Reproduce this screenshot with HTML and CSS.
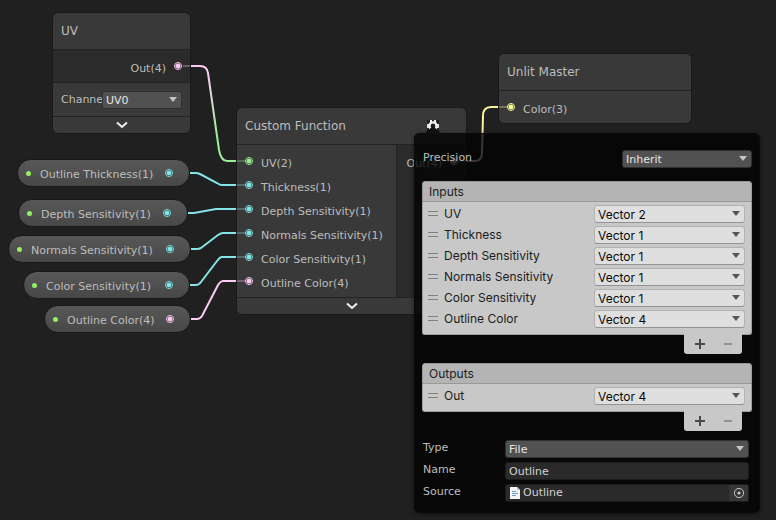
FILE: index.html
```html
<!DOCTYPE html>
<html lang="en">
<head>
<meta charset="utf-8">
<title>Shader Graph</title>
<link rel="stylesheet" href="styles.css">
</head>
<body>
<main class="graph">
  <section class="node node-uv">
    <h2 class="node-title">UV</h2>
    <div class="port-area port-area-out">
      <div class="port port-out">Out(4)<i class="dot pink"></i></div>
    </div>
    <div class="control">
      <label class="control-label" for="channel">Channel</label>
      <span class="select dark control-select"><select id="channel"><option>UV0</option></select></span>
    </div>
    <button class="collapse" aria-label="Collapse UV"><svg width="12" height="8" viewBox="0 0 12 8"><path d="M1 1.5 6 6 11 1.5"/></svg></button>
  </section>

  <section class="node node-custom">
    <h2 class="node-title">Custom Function
      <button class="gear" aria-label="Settings"><svg width="12" height="12" viewBox="0 0 12 12"><rect width="12" height="12" fill="#222"/><circle cx="6" cy="6" r="3.6" fill="none" stroke="#f2f2f2" stroke-width="2.4"/><path d="M3 1h2M7 1h2M1 4v4M11 4v4M2.4 11h2M7.6 11h2" stroke="#f2f2f2" stroke-width="1.8"/></svg></button>
    </h2>
    <div class="node-body">
      <div class="port-area inputs">
        <div class="port"><i class="dot green"></i>UV(2)</div>
        <div class="port"><i class="dot cyan"></i>Thickness(1)</div>
        <div class="port"><i class="dot cyan"></i>Depth Sensitivity(1)</div>
        <div class="port"><i class="dot cyan"></i>Normals Sensitivity(1)</div>
        <div class="port"><i class="dot cyan"></i>Color Sensitivity(1)</div>
        <div class="port"><i class="dot pink"></i>Outline Color(4)</div>
      </div>
      <div class="port-area port-area-out outputs">
        <div class="port port-out">Out(4)<i class="dot pink"></i></div>
      </div>
    </div>
    <button class="collapse" aria-label="Collapse Custom Function"><svg width="12" height="8" viewBox="0 0 12 8"><path d="M1 1.5 6 6 11 1.5"/></svg></button>
  </section>

  <section class="node node-unlit">
    <h2 class="node-title">Unlit Master</h2>
    <div class="port-area">
      <div class="port"><i class="dot yellow"></i>Color(3)</div>
    </div>
  </section>

  <div class="pill pill-thickness"><i class="lamp"></i><span>Outline Thickness(1)</span><i class="dot cyan"></i></div>
  <div class="pill pill-depth"><i class="lamp"></i><span>Depth Sensitivity(1)</span><i class="dot cyan"></i></div>
  <div class="pill pill-normals"><i class="lamp"></i><span>Normals Sensitivity(1)</span><i class="dot cyan"></i></div>
  <div class="pill pill-color"><i class="lamp"></i><span>Color Sensitivity(1)</span><i class="dot cyan"></i></div>
  <div class="pill pill-outline"><i class="lamp"></i><span>Outline Color(4)</span><i class="dot pink"></i></div>

  <svg class="wires" width="776" height="520" viewBox="0 0 776 520" aria-hidden="true">
    <defs>
      <linearGradient id="pinkGreen" gradientUnits="userSpaceOnUse" x1="0" y1="66" x2="0" y2="161"><stop offset="0.1" stop-color="#fbcbf4"/><stop offset="0.75" stop-color="#9aef92"/></linearGradient>
      <linearGradient id="pinkYellow" gradientUnits="userSpaceOnUse" x1="0" y1="161" x2="0" y2="107"><stop offset="0" stop-color="#fbcbf4"/><stop offset="0.7" stop-color="#f6f19a"/></linearGradient>
    </defs>
    <path stroke="url(#pinkGreen)" d="M191 66h9q7 0 8 7L219 150q2 11 8 11h9"/>
    <path class="c" d="M190 173h6q2 0 4 1l17 9q3 2 5 2h14"/>
    <path class="c" d="M188 213h6l22-4h20"/>
    <path class="c" d="M191 249h6q2 0 4-1l17-13q3-2 5-2h13"/>
    <path class="c" d="M190 285h6q3 0 5-3l16-21q3-4 5-4h14"/>
    <path class="p" d="M191 319h6q3 0 5-3l15-29q3-6 6-6h13"/>
    <path stroke="url(#pinkYellow)" d="M467 161h8q7 0 7-9l1-36q0-9 8-9h7"/>
    <g opacity=".3">
      <path class="p" d="M183 66h7M459 161h7"/>
      <path class="g" d="M237 161h8"/>
      <path class="c" d="M237 185h8M237 209h8M237 233h8M237 257h8"/>
      <path class="p" d="M237 281h8"/>
      <path class="y" d="M499 107h8"/>
    </g>
  </svg>

  <form class="panel">
    <svg class="pointer" width="18" height="8" viewBox="0 0 18 8" aria-hidden="true"><path d="M0 8 9 0l9 8z"/></svg>
    <div class="precision">
      <label for="precision">Precision</label>
      <span class="select dark"><select id="precision"><option>Inherit</option></select></span>
    </div>

    <section class="list">
      <h3 class="list-title">Inputs</h3>
      <div class="list-body">
        <label class="item"><i class="grip"></i><span>UV</span><span class="select light"><select><option>Vector 2</option></select></span></label>
        <label class="item"><i class="grip"></i><span>Thickness</span><span class="select light"><select><option>Vector 1</option></select></span></label>
        <label class="item"><i class="grip"></i><span>Depth Sensitivity</span><span class="select light"><select><option>Vector 1</option></select></span></label>
        <label class="item"><i class="grip"></i><span>Normals Sensitivity</span><span class="select light"><select><option>Vector 1</option></select></span></label>
        <label class="item"><i class="grip"></i><span>Color Sensitivity</span><span class="select light"><select><option>Vector 1</option></select></span></label>
        <label class="item"><i class="grip"></i><span>Outline Color</span><span class="select light"><select><option>Vector 4</option></select></span></label>
      </div>
      <div class="list-tools">
        <button type="button" aria-label="Add input"><svg width="10" height="10" viewBox="0 0 10 10"><path d="M0 5h10M5 0v10"/></svg></button>
        <button type="button" class="off" aria-label="Remove input"><svg width="10" height="10" viewBox="0 0 10 10"><path d="M1 5h8"/></svg></button>
      </div>
    </section>

    <section class="list">
      <h3 class="list-title">Outputs</h3>
      <div class="list-body">
        <label class="item"><i class="grip"></i><span>Out</span><span class="select light"><select><option>Vector 4</option></select></span></label>
      </div>
      <div class="list-tools">
        <button type="button" aria-label="Add output"><svg width="10" height="10" viewBox="0 0 10 10"><path d="M0 5h10M5 0v10"/></svg></button>
        <button type="button" class="off" aria-label="Remove output"><svg width="10" height="10" viewBox="0 0 10 10"><path d="M1 5h8"/></svg></button>
      </div>
    </section>

    <div class="fields">
      <label for="type">Type</label>
      <span class="select dark"><select id="type"><option>File</option></select></span>
      <label for="name">Name</label>
      <input class="field" id="name" type="text" value="Outline">
      <label for="source">Source</label>
      <div class="field object">
        <svg width="10" height="12" viewBox="0 0 10 12" aria-hidden="true"><path fill="#f4f4f4" d="M0 0h7l3 3v9H0z"/><path fill="#b8c4d0" d="M7 0v3h3z"/><path stroke="#6f9cc8" d="M2 4.5h4M2 6.5h6M2 8.5h4"/></svg>
        <input id="source" type="text" value="Outline" readonly>
        <button type="button" class="picker" aria-label="Pick source"><svg width="12" height="12" viewBox="0 0 12 12"><circle cx="6" cy="6" r="4.6" fill="none" stroke="#c4c4c4"/><circle cx="6" cy="6" r="1.6" fill="#c4c4c4"/></svg></button>
      </div>
    </div>
  </form>
</main>
</body>
</html>
```

FILE: styles.css
```css
* { box-sizing: border-box; }

body {
  margin: 0;
  background: #202020;
  color: #bdbdbd;
  font: 11px/16px "DejaVu Sans", sans-serif;
}

h2, h3 { margin: 0; font-weight: normal; }

button, input, select {
  margin: 0;
  padding: 0;
  border: 0;
  background: none;
  color: inherit;
  font: inherit;
}

.graph {
  position: relative;
  min-height: 100vh;
  overflow: hidden;
}

/* Nodes on the free canvas */
.node {
  position: absolute;
  border: 1px solid #191919;
  border-radius: 6px;
  background: #393939;
}
.node-uv { left: 52px; top: 12px; width: 139px; }
.node-custom { left: 236px; top: 107px; width: 231px; }
.node-unlit { left: 498px; top: 53px; width: 194px; }

.node-title {
  display: flex;
  align-items: center;
  justify-content: space-between;
  height: 36px;
  padding: 0 27px 0 8px;
  font-size: 12px;
}
.node-body { display: flex; border-bottom: 1px solid #232323; }
.gear { display: flex; }

.port-area {
  padding: 4px 0;
  border-top: 1px solid #232323;
}
.port-area-out { background: #2b2b2b; }
.inputs { width: 160px; border-right: 1px solid #232323; }
.outputs { flex: 1; }

.port {
  display: flex;
  gap: 8px;
  height: 24px;
  padding: 2px 8px 0;
  line-height: 26px;
}
.port-out { justify-content: flex-end; }

.dot {
  flex: none;
  width: 8px;
  height: 8px;
  border: 1px solid currentColor;
  border-radius: 50%;
  background: radial-gradient(circle, currentColor 2px, #161616 3px);
}
.port .dot { margin-top: 6px; }
.cyan { color: #84e4e7; }
.green { color: #9aef92; }
.pink { color: #fbcbf4; }
.yellow { color: #f6ff9a; }

.control {
  display: flex;
  align-items: center;
  height: 35px;
  padding: 0 8px;
  border-top: 1px solid #232323;
  border-bottom: 1px solid #232323;
}
.control-label { width: 41px; padding-top: 1px; overflow: hidden; }
.control-select { flex: 1; }

.collapse {
  display: flex;
  align-items: center;
  justify-content: center;
  width: 100%;
  height: 16px;
}
.collapse path { fill: none; stroke: #f0f0f0; stroke-width: 2; }

/* Property pills */
.pill {
  position: absolute;
  display: flex;
  align-items: center;
  height: 28px;
  padding: 0 16px 0 8px;
  border: 1px solid #191919;
  border-radius: 14px;
  background: linear-gradient(#585858, #474747);
}
.pill span { flex: 1; padding: 4px 0 0 9px; }
.pill-thickness { left: 17px; top: 159px; width: 173px; }
.pill-depth { left: 18px; top: 199px; width: 170px; }
.pill-normals { left: 8px; top: 235px; width: 183px; }
.pill-color { left: 23px; top: 271px; width: 167px; }
.pill-outline { left: 44px; top: 305px; width: 147px; }
.lamp { width: 5px; height: 5px; border-radius: 50%; background: #93ef63; }

.wires { position: absolute; left: 0; top: 0; pointer-events: none; }
.wires path { fill: none; stroke-width: 2; }
.wires .c { stroke: #84e4e7; }
.wires .p { stroke: #fbcbf4; }
.wires .g { stroke: #9aef92; }
.wires .y { stroke: #f6ff9a; }

/* Drop-downs */
.select { position: relative; display: block; height: 18px; }
.select select {
  display: block;
  width: 100%;
  height: 100%;
  padding: 0 20px 0 3px;
  appearance: none;
  border: 1px solid;
  border-radius: 3px;
}
.select::after {
  content: "";
  position: absolute;
  right: 5px;
  top: 6px;
  border: 4px solid transparent;
  border-top: 5px solid;
  border-bottom: 0;
  pointer-events: none;
}
.dark select {
  padding-top: 1px;
  background: #515151;
  border-color: #303030;
  color: #e4e4e4;
}
.dark::after { border-top-color: #c4c4c4; }
.light select {
  background: #dfdfdf;
  border-color: #b2b2b2 #b2b2b2 #939393;
  color: #090909;
}
.light::after { border-top-color: #555; }

/* Settings panel */
.panel {
  position: absolute;
  left: 414px;
  top: 133px;
  width: 346px;
  padding: 16px 7px 10px;
  border: 1px solid #0a0a0a;
  border-radius: 5px;
  background: rgba(0, 0, 0, 0.76);
  box-shadow: 0 1px 4px rgba(0, 0, 0, 0.5);
}
.pointer { position: absolute; left: 9px; top: -8px; fill: #111; }

.precision {
  display: flex;
  justify-content: space-between;
  height: 31px;
  padding-left: 1px;
}
.precision .select { width: 130px; }

.list { font: 12px/17px Inter, sans-serif; color: #1c1c1c; }
.list + .list { margin-top: 9px; }
.list-title {
  height: 21px;
  padding: 1px 6px;
  border: 1px solid #999;
  border-radius: 3px 3px 0 0;
  background: #b4b4b4;
  font-size: 12px;
}
.list-body {
  padding: 1px 6px 5px 5px;
  border: 1px solid #a0a0a0;
  border-top: 0;
  border-radius: 0 0 3px 3px;
  background: #c8c8c8;
}
.item { display: flex; align-items: center; height: 21px; }
.item > span:nth-child(2) { flex: 1; }
.item .select { width: 151px; }
.light select { padding-bottom: 1px; }
.grip {
  width: 10px;
  height: 5px;
  margin-right: 6px;
  border: solid #808080;
  border-width: 1px 0;
}
.list-tools {
  display: flex;
  width: 58px;
  height: 20px;
  margin: -1px 10px 0 auto;
  padding-left: 2px;
  border-radius: 0 0 3px 3px;
  background: #c8c8c8;
}
.list-tools button {
  display: flex;
  flex: 1;
  align-items: center;
  justify-content: center;
}
.list-tools path { stroke: #4a4a4a; stroke-width: 2; }
.list-tools .off path { stroke: #929292; }

.fields {
  display: grid;
  grid-template-columns: 82px 1fr;
  row-gap: 4px;
  padding: 9px 3px 0 1px;
}
.field {
  height: 18px;
  padding: 0 3px;
  border: 1px solid #1d1d1d;
  border-radius: 3px;
  background: #2a2a2a;
  color: #d2d2d2;
  min-width: 0;
}
.object { display: flex; align-items: center; gap: 3px; padding: 0 0 0 4px; }
.object input { flex: 1; min-width: 0; }
.picker {
  display: flex;
  align-items: center;
  justify-content: center;
  width: 19px;
  height: 16px;
  background: #373737;
}
```
